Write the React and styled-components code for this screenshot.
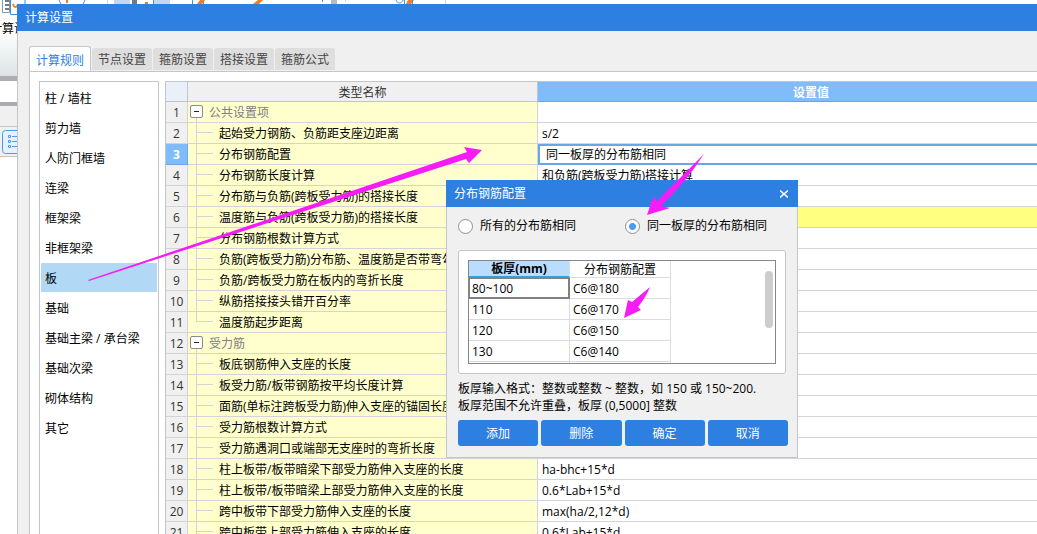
import React, { useState } from 'react';
import styled, { createGlobalStyle, css } from 'styled-components';

const color = {
  blue: '#2d7fe1',
  face: '#f0f0f0',
  line: '#d4d4d8',
  frame: '#c3c5ca',
  head: '#80bbfa',
  focus: '#68a6e6',
  cream: '#ffffce',
  mark: '#f71cf7',
};

const GlobalStyle = createGlobalStyle`
  * {
    box-sizing: border-box;
  }

  body {
    margin: 0;
    overflow: hidden;
    background: #fff;
    color: #000;
    font: 12px/20px "Open Sans", "Noto Sans CJK SC", sans-serif;
  }

  button {
    font: inherit;
    color: inherit;
    padding: 0;
    border: 0;
    background: none;
  }

  table {
    border-collapse: separate;
    border-spacing: 0;
    table-layout: fixed;
  }
`;

const Desktop = styled.div`
  position: relative;
  height: 100vh;
  overflow: hidden;
`;

const Backdrop = {
  Ribbon: styled.div`
    height: 76px;
    overflow: hidden;
    background: linear-gradient(#fff 40%, #dde3e5);
  `,
  Art: styled.svg`
    display: block;
  `,
  Label: styled.div`
    width: 27px;
    margin-left: -10px;
    padding-top: 4px;
    overflow: hidden;
    white-space: nowrap;
  `,
  Field: styled.div`
    height: 30px;
    border-top: 5px solid #abadb0;
    border-bottom: 4px solid #a9abae;
    background: #fff;
  `,
  Strip: styled.div`
    height: 20px;
    background: ${color.face};
  `,
  Tools: styled.div`
    height: 31px;
    padding: 3px 2px;
    border: solid ${color.frame};
    border-width: 1px 0;
    background: ${color.face};
  `,
};

const Win = {
  Frame: styled.div`
    position: absolute;
    top: 4px;
    left: 17px;
    right: -48px;
    bottom: 0;
    display: flex;
    flex-direction: column;
    background: ${color.face};
  `,
  Title: styled.div`
    display: flex;
    flex: none;
    align-items: center;
    justify-content: space-between;
    height: 27px;
    padding: 0 8px;
    background: ${color.blue};
    color: #fff;
  `,
  Body: styled.div`
    display: flex;
    flex: 1;
    flex-direction: column;
    min-height: 0;
    padding: 15px 0 0 11px;
    border-left: 1px solid ${color.frame};
  `,
};

const Tabs = styled.div`
  display: flex;
  align-items: flex-end;
  gap: 1px;
  height: 25px;
`;

const Tab = styled.button`
  width: 60px;
  height: 22px;
  margin-bottom: 1px;
  padding-top: 2px;
  border-radius: 3px 3px 0 0;
  background: #dedede;
  color: #444;

  ${props => props.$active && css`
    width: 62px;
    height: 26px;
    margin-bottom: -1px;
    border: 1px solid ${color.frame};
    border-bottom: 0;
    background: #fff;
    color: ${color.blue};
  `}
`;

const Panel = styled.div`
  display: flex;
  flex: 1;
  gap: 6px;
  min-height: 0;
  padding: 9px 0 0 9px;
  border: solid ${color.frame};
  border-width: 1px 0 0 1px;
  background: #fff;
`;

const Nav = styled.nav`
  display: flex;
  flex: none;
  flex-direction: column;
  width: 120px;
  padding: 1px;
  border: solid ${color.frame};
  border-width: 1px 1px 0;
`;

const NavItem = styled.button`
  flex: none;
  height: 30px;
  padding: 2px 4px 0;
  text-align: left;
  background: ${props => (props.$active ? '#b1d9f5' : 'none')};
  background-clip: padding-box;
  border-bottom: 1px solid transparent;
`;

const Grid = {
  Table: styled.table`
    flex: 1;
    width: 0;
    height: fit-content;
    border: solid ${color.frame};
    border-width: 1px 0 0 1px;
  `,
  Head: styled.th`
    height: 20px;
    padding: 2px 0 0;
    line-height: 17px;
    font-weight: ${props => (props.$active ? 'bold' : 'normal')};
    color: ${props => (props.$active ? '#fff' : '#333')};
    background: ${props => (props.$active ? color.head : color.face)};
    border-bottom: 1px solid ${props => (props.$active ? color.focus : color.frame)};
    border-right: 1px solid ${color.frame};
  `,
  Corner: styled.td`
    padding: 0;
    background: #eaf0f8;
    border: solid ${color.frame};
    border-width: 0 1px 1px 0;
  `,
  Number: styled.th`
    height: 21px;
    padding: 2px 0 0;
    line-height: 18px;
    font-weight: ${props => (props.$active ? 'bold' : 'normal')};
    color: ${props => (props.$active ? '#fff' : '#333')};
    background: ${props => (props.$active ? color.head : color.face)};
    border: solid ${props => (props.$active ? color.focus : color.line)};
    border-width: 0 1px 1px 0;
  `,
  Name: styled.td`
    padding: 0;
    background: ${color.cream};
    border: solid ${color.line};
    border-width: 0 1px 1px 0;
  `,
  Value: styled.td`
    height: 21px;
    padding: 2px 4px 0;
    line-height: 18px;
    background: ${props => (props.$warn ? '#ffff80' : '#fff')};
    border-bottom: 1px solid ${color.line};

    ${props => props.$active && css`
      padding: 0 6px;
      border: 2px solid ${color.focus};
      line-height: 17px;
    `}
  `,
};

const Branch = styled.div`
  display: flex;
  height: 20px;
  padding-left: 2px;
  overflow: hidden;
  line-height: 22px;
  white-space: nowrap;
`;

const Guide = styled.span`
  flex: none;
  width: 23px;
  margin-left: 6px;
  background:
    linear-gradient(${color.line}, ${color.line}) 0 0 / 1px ${props => (props.$last ? '10px' : '100%')} no-repeat,
    linear-gradient(${color.line}, ${color.line}) 0 9px / 17px 1px no-repeat;
`;

const Group = styled.div`
  display: flex;
  gap: 6px;
  height: 20px;
  padding: 3px 2px 0;
  color: #808080;
  line-height: 16px;
  background: linear-gradient(${color.line}, ${color.line}) 8px 100% / 1px 4px no-repeat;
`;

const Toggle = styled.button`
  display: flex;
  align-items: center;
  justify-content: center;
  width: 13px;
  height: 13px;
  border: 1px solid #8c8c8c;
  border-radius: 2px;
  background: #fff;

  &::before {
    content: "";
    width: 5px;
    height: 1px;
    background: #222;
  }
`;

const Dialog = {
  Frame: styled.div`
    position: absolute;
    top: 180px;
    left: 446px;
    width: 352px;
  `,
  Body: styled.div`
    padding: 11px 9px 11px 11px;
    border: 1px solid ${color.frame};
    border-top: 0;
    background: ${color.face};
  `,
  Close: styled.button`
    display: flex;
    padding: 2px;
  `,
  Options: styled.div`
    display: grid;
    grid-template-columns: 167px 1fr;
    height: 16px;
    line-height: 16px;
  `,
  Option: styled.label`
    display: flex;
    align-items: center;
    gap: 7px;
  `,
  Box: styled.div`
    margin: 16px 2px 0 0;
    padding: 9px;
    border: 1px solid ${color.frame};
    border-radius: 3px;
    background: #fff;
  `,
  Note: styled.p`
    margin: 6px 0;
    line-height: 17px;
  `,
  Actions: styled.div`
    display: grid;
    grid-template-columns: repeat(4, 1fr);
    gap: 3px;
  `,
};

const Radio = styled.input`
  appearance: none;
  width: 15px;
  height: 15px;
  margin: 0;
  border: 1px solid #8e8e8e;
  border-radius: 50%;
  background: #fff;

  &:checked {
    background: radial-gradient(circle, #4a9bf8 3px, #fff 4px);
  }
`;

const Action = styled.button`
  height: 26px;
  padding-top: 2px;
  border-radius: 3px;
  background: ${color.blue};
  color: #fff;
`;

const Sizes = {
  View: styled.div`
    display: flex;
    justify-content: space-between;
    height: 104px;
    overflow: hidden;
    border: 1px solid #828790;
  `,
  Table: styled.table`
    width: 202px;
    height: fit-content;
  `,
  Head: styled.th`
    height: 17px;
    padding: 0;
    line-height: 15px;
    font-weight: ${props => (props.$active ? 'bold' : 'normal')};
    background: ${props => (props.$active ? '#b9dcff' : '#fff')};
    border-right: 1px solid #dcdcdc;
    border-bottom: ${props => (props.$active ? '2px solid #35a0d8' : '1px solid #dcdcdc')};
  `,
  Cell: styled.td`
    height: 21px;
    padding: 2px 3px 0;
    line-height: 18px;
    border: solid ${props => (props.$active ? '#808080' : '#dcdcdc')};
    border-width: 0 1px 1px 0;
    box-shadow: ${props => (props.$active ? 'inset 1px 1px #808080, inset -1px -1px #808080' : 'none')};
  `,
  Thumb: styled.div`
    width: 8px;
    height: 57px;
    margin: 10px 2px 0 0;
    border-radius: 4px;
    background: #cdcdcd;
  `,
};

const Marks = styled.svg`
  position: absolute;
  top: 0;
  left: 0;
  pointer-events: none;
`;

const tabs = ['计算规则', '节点设置', '箍筋设置', '搭接设置', '箍筋公式'];

const members = [
  '柱 / 墙柱', '剪力墙', '人防门框墙', '连梁', '框架梁', '非框架梁',
  '板', '基础', '基础主梁 / 承台梁', '基础次梁', '砌体结构', '其它',
];

const rows = [
  { name: '公共设置项', group: true },
  { name: '起始受力钢筋、负筋距支座边距离', value: 's/2' },
  { name: '分布钢筋配置', value: '同一板厚的分布筋相同' },
  { name: '分布钢筋长度计算', value: '和负筋(跨板受力筋)搭接计算' },
  { name: '分布筋与负筋(跨板受力筋)的搭接长度' },
  { name: '温度筋与负筋(跨板受力筋)的搭接长度', warn: true },
  { name: '分布钢筋根数计算方式' },
  { name: '负筋(跨板受力筋)分布筋、温度筋是否带弯勾' },
  { name: '负筋/跨板受力筋在板内的弯折长度' },
  { name: '纵筋搭接接头错开百分率' },
  { name: '温度筋起步距离', last: true },
  { name: '受力筋', group: true },
  { name: '板底钢筋伸入支座的长度' },
  { name: '板受力筋/板带钢筋按平均长度计算' },
  { name: '面筋(单标注跨板受力筋)伸入支座的锚固长度' },
  { name: '受力筋根数计算方式' },
  { name: '受力筋遇洞口或端部无支座时的弯折长度' },
  { name: '柱上板带/板带暗梁下部受力筋伸入支座的长度', value: 'ha-bhc+15*d' },
  { name: '柱上板带/板带暗梁上部受力筋伸入支座的长度', value: '0.6*Lab+15*d' },
  { name: '跨中板带下部受力筋伸入支座的长度', value: 'max(ha/2,12*d)' },
  { name: '跨中板带上部受力筋伸入支座的长度', value: '0.6*Lab+15*d' },
];

const sizes = [
  ['80~100', 'C6@180'],
  ['110', 'C6@170'],
  ['120', 'C6@150'],
  ['130', 'C6@140'],
  ['', ''],
];

const RibbonArt = () => (
  <Backdrop.Art width="520" height="15" aria-hidden="true">
    <path d="M2.5 0v12.5h7V0" fill="none" stroke="#8796a8" />
    <path d="M5 0h4v2H5zM5 4h4v2H5zM5 8h4v2H5z" fill="#6f7a86" />
    <path d="M10.5 0v14.5H25V0" fill="#fff" stroke="#3b8de0" />
    <path d="M13 4c1 4 4 4 5 0" fill="none" stroke="#f08a24" strokeWidth="2" />
    <path d="M59 0l2 4M85 0l-2 4M132.500 0v4M153.500 0v4M192.500 0v4M203.500 0v4M322.500 0v2" fill="none" stroke="#4a90d9" />
    <path d="M66 0h2v3h-2zM145 2h3v2h-3zM197 4l3-4h5l-3 4zM253 4l5-4h5l-4 4zM406 4l2-4h6l-3 4z" fill="#f17c22" />
    <path d="M114 0h16v4h-16zM154 0h16v4h-16z" fill="#c5d6ee" />
    <path d="M132 0h5v4h-5z" fill="#6f7a86" />
    <path d="M331 0h6v4h-6z" fill="#b8bcc1" />
    <path d="M396 0c1 4 6 4 7 0M404.500 0v4M412.500 0v4" fill="none" stroke="#4a90d9" />
    <path d="M107.500 0v4M345.500 0v2M445.500 0v4" fill="none" stroke="#d5d7da" />
  </Backdrop.Art>
);

const ListIcon = () => (
  <svg width="24" height="24" aria-hidden="true">
    <rect x=".5" y=".5" width="23" height="23" rx="3" fill="#e4f1ff" stroke="#4a9bf0" />
    <path
      d="M6.500 5.500h2v2h-2zM6.500 10.500h2v2h-2zM6.500 15.500h2v2h-2zM10 6.500h9M10 11.500h9M10 16.500h9"
      fill="none"
      stroke="#4a9bf0"
    />
  </svg>
);

const SettingRow = ({ row, number, active }) => (
  <tr>
    <Grid.Number scope="row" $active={active}>{number}</Grid.Number>
    <Grid.Name>
      {row.group ? (
        <Group>
          <Toggle aria-label={`折叠 ${row.name}`} />
          {row.name}
        </Group>
      ) : (
        <Branch>
          <Guide $last={row.last} />
          {row.name}
        </Branch>
      )}
    </Grid.Name>
    <Grid.Value $active={active} $warn={row.warn}>{row.value}</Grid.Value>
  </tr>
);

const SettingTable = () => (
  <Grid.Table>
    <colgroup>
      <col style={{ width: 22 }} />
      <col style={{ width: 350 }} />
      <col />
    </colgroup>
    <thead>
      <tr>
        <Grid.Corner />
        <Grid.Head>类型名称</Grid.Head>
        <Grid.Head $active>设置值</Grid.Head>
      </tr>
    </thead>
    <tbody>
      {rows.map((row, i) => (
        <SettingRow key={row.name} row={row} number={i + 1} active={i === 2} />
      ))}
    </tbody>
  </Grid.Table>
);

const SizeDialog = () => {
  const [mode, setMode] = useState('thickness');

  return (
    <Dialog.Frame role="dialog" aria-label="分布钢筋配置">
      <Win.Title>
        分布钢筋配置
        <Dialog.Close aria-label="关闭">
          <svg width="8" height="8">
            <path d="M0 .5l8 7M8 .5l-8 7" stroke="#fff" strokeWidth="1.500" />
          </svg>
        </Dialog.Close>
      </Win.Title>
      <Dialog.Body>
        <Dialog.Options>
          <Dialog.Option>
            <Radio type="radio" name="mode" checked={mode === 'all'} onChange={() => setMode('all')} />
            所有的分布筋相同
          </Dialog.Option>
          <Dialog.Option>
            <Radio type="radio" name="mode" checked={mode === 'thickness'} onChange={() => setMode('thickness')} />
            同一板厚的分布筋相同
          </Dialog.Option>
        </Dialog.Options>
        <Dialog.Box>
          <Sizes.View>
            <Sizes.Table>
              <thead>
                <tr>
                  <Sizes.Head $active>板厚(mm)</Sizes.Head>
                  <Sizes.Head>分布钢筋配置</Sizes.Head>
                </tr>
              </thead>
              <tbody>
                {sizes.map(([thickness, bar], i) => (
                  <tr key={thickness}>
                    <Sizes.Cell $active={i === 0}>{thickness}</Sizes.Cell>
                    <Sizes.Cell>{bar}</Sizes.Cell>
                  </tr>
                ))}
              </tbody>
            </Sizes.Table>
            <Sizes.Thumb />
          </Sizes.View>
        </Dialog.Box>
        <Dialog.Note>
          板厚输入格式：整数或整数 ~ 整数，如 150 或 150~200.
          <br />
          板厚范围不允许重叠，板厚 (0,5000] 整数
        </Dialog.Note>
        <Dialog.Actions>
          <Action>添加</Action>
          <Action>删除</Action>
          <Action>确定</Action>
          <Action>取消</Action>
        </Dialog.Actions>
      </Dialog.Body>
    </Dialog.Frame>
  );
};

const App = () => {
  const [tab, setTab] = useState(tabs[0]);
  const [member, setMember] = useState('板');

  return (
    <Desktop>
      <GlobalStyle />
      <Backdrop.Ribbon>
        <RibbonArt />
        <Backdrop.Label>计算设置</Backdrop.Label>
      </Backdrop.Ribbon>
      <Backdrop.Field />
      <Backdrop.Strip />
      <Backdrop.Tools><ListIcon /></Backdrop.Tools>

      <Win.Frame>
        <Win.Title>计算设置</Win.Title>
        <Win.Body>
          <Tabs role="tablist">
            {tabs.map(name => (
              <Tab
                key={name}
                role="tab"
                aria-selected={name === tab}
                $active={name === tab}
                onClick={() => setTab(name)}
              >
                {name}
              </Tab>
            ))}
          </Tabs>
          <Panel>
            <Nav>
              {members.map(name => (
                <NavItem key={name} $active={name === member} onClick={() => setMember(name)}>
                  {name}
                </NavItem>
              ))}
            </Nav>
            <SettingTable />
          </Panel>
        </Win.Body>
      </Win.Frame>

      <SizeDialog />

      <Marks width="800" height="400" aria-hidden="true">
        <g fill={color.mark}>
          <path d="M88 280L467 152L464 147L482 150L469 163L466 159L89 281Z" />
          <path d="M704 154L657 201L653 197L647 215L670 208L661 206Q686 182 704 154Z" />
          <path d="M650 287L632 302L628 300L624 318L641 310L638 307Q646 297 650 287Z" />
        </g>
      </Marks>
    </Desktop>
  );
};

export default App;
